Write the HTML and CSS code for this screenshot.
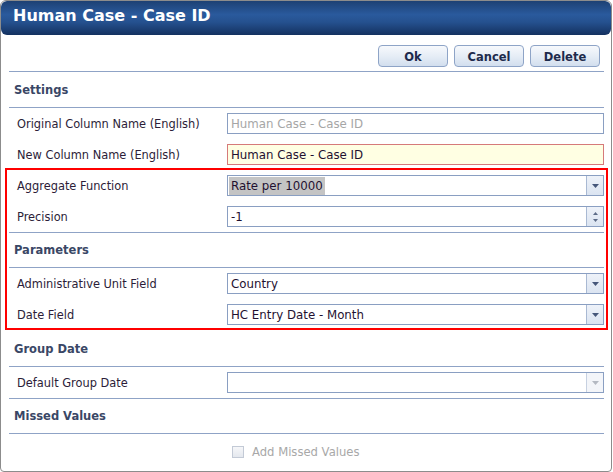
FILE: index.html
```html
<!DOCTYPE html>
<html>
<head>
<meta charset="utf-8">
<link rel="stylesheet" href="styles.css">
</head>
<body>
<div class="dialog">
  <div class="titlebar">Human Case - Case ID</div>
  <div class="content">
    <div class="toolbar">
      <button class="btn">Ok</button>
      <button class="btn">Cancel</button>
      <button class="btn">Delete</button>
    </div>
    <div class="section-head">Settings</div>
    <div class="row">
      <span class="label">Original Column Name (English)</span>
      <div class="field readonly"><span class="text">Human Case - Case ID</span></div>
    </div>
    <div class="row row-tight">
      <span class="label">New Column Name (English)</span>
      <div class="field required"><span class="text">Human Case - Case ID</span></div>
    </div>
    <div class="highlight">
      <div class="row">
        <span class="label">Aggregate Function</span>
        <div class="field combo">
          <span class="text"><span class="selected">Rate per 10000</span></span>
          <span class="drop"><svg width="7" height="4" viewBox="0 0 7 4"><polygon points="0,0 7,0 3.5,4" fill="#46577a"/></svg></span>
        </div>
      </div>
      <div class="row">
        <span class="label">Precision</span>
        <div class="field combo">
          <span class="text">-1</span>
          <span class="spin">
            <svg width="5" height="3" viewBox="0 0 5 3"><polygon points="2.5,0 5,3 0,3" fill="#5d6c88"/></svg>
            <svg width="5" height="3" viewBox="0 0 5 3"><polygon points="0,0 5,0 2.5,3" fill="#5d6c88"/></svg>
          </span>
        </div>
      </div>
      <div class="section-head top">Parameters</div>
      <div class="row">
        <span class="label">Administrative Unit Field</span>
        <div class="field combo">
          <span class="text">Country</span>
          <span class="drop"><svg width="7" height="4" viewBox="0 0 7 4"><polygon points="0,0 7,0 3.5,4" fill="#46577a"/></svg></span>
        </div>
      </div>
      <div class="row row-tight">
        <span class="label">Date Field</span>
        <div class="field combo">
          <span class="text">HC Entry Date - Month</span>
          <span class="drop"><svg width="7" height="4" viewBox="0 0 7 4"><polygon points="0,0 7,0 3.5,4" fill="#46577a"/></svg></span>
        </div>
      </div>
    </div>
    <div class="section-head tall">Group Date</div>
    <div class="row">
      <span class="label">Default Group Date</span>
      <div class="field combo disabled">
        <span class="text"></span>
        <span class="drop"><svg width="7" height="4" viewBox="0 0 7 4"><polygon points="0,0 7,0 3.5,4" fill="#b4b9c2"/></svg></span>
      </div>
    </div>
    <div class="section-head top">Missed Values</div>
    <div class="check-row">
      <span class="checkbox"></span>
      <span class="check-label">Add Missed Values</span>
    </div>
  </div>
</div>
</body>
</html>
```

FILE: styles.css
```css
* { box-sizing: border-box; }
html, body { margin: 0; padding: 0; background: #ffffff; }
body { font-family: "DejaVu Sans", Verdana, sans-serif; }

.dialog {
  width: 612px;
  height: 472px;
  border: 1px solid #8c8c8c;
  border-radius: 6px 6px 4px 4px;
  background: #ffffff;
  overflow: hidden;
}

.titlebar {
  height: 34px;
  border-radius: 6px;
  padding-left: 12px;
  line-height: 30px;
  font-size: 16px;
  font-weight: bold;
  color: #ffffff;
  background: linear-gradient(to bottom, #1d4174 0%, #2a5a9d 40%, #25518f 62%, #143160 100%);
}

.content {
  padding: 0 7px 0 8px;
}

.toolbar {
  display: flex;
  justify-content: flex-end;
  gap: 6px;
  padding: 10px 4px 4px 0;
  border-bottom: 1px solid #8fa3c6;
}

.btn {
  width: 70px;
  height: 22px;
  padding: 1px 0 0 0;
  border: 1px solid #8ea4c7;
  border-radius: 4px;
  background: linear-gradient(to bottom, #f7f9fc 0%, #e6edf6 50%, #d2deee 100%);
  font-family: "DejaVu Sans", Verdana, sans-serif;
  font-size: 11.5px;
  font-weight: bold;
  color: #1d2a4c;
}

.section-head {
  height: 36px;
  display: flex;
  align-items: center;
  padding-left: 5px;
  font-size: 11.5px;
  font-weight: bold;
  color: #3a4766;
  border-bottom: 1px solid #8fa3c6;
}
.section-head.top { border-top: 1px solid #8fa3c6; }
.section-head.tall { height: 37px; padding-top: 2px; }

.row {
  display: flex;
  align-items: center;
  padding: 5px 0 5px 8px;
}
.row-tight { padding-bottom: 3px; }

.label {
  width: 210px;
  flex: none;
  font-size: 11.4px;
  color: #2c1d38;
}

.field {
  flex: 1;
  height: 21px;
  border: 1px solid #8a9fc2;
  display: flex;
  align-items: stretch;
  font-size: 11.8px;
  color: #1f1030;
  background: #ffffff;
}
.field .text {
  flex: 1;
  display: flex;
  align-items: center;
  padding-left: 3px;
  white-space: nowrap;
}
.field.readonly { color: #a6a6a6; }
.field.required {
  background: #ffffe3;
  border-color: #d67a7a;
}
.combo .text { padding-left: 1px; }
.combo .text:not(:has(.selected)) { padding-left: 3px; }
.selected {
  background: #c4c4c4;
  padding: 2px 2px 2px 2px;
}

.drop, .spin {
  width: 17px;
  flex: none;
  border-left: 1px solid #a9b9d3;
  background: linear-gradient(to bottom, #eef2f9 0%, #dbe4f1 100%);
  display: flex;
  align-items: center;
  justify-content: center;
}
.spin {
  flex-direction: column;
  gap: 4px;
}
.disabled .drop {
  background: #f3f5f9;
  border-left-color: #c7d1e1;
}

.highlight {
  margin: 0 -4px;
  padding: 0 2px;
  border: 2px solid #ff0000;
}

.check-row {
  display: flex;
  align-items: center;
  gap: 8px;
  padding: 11px 0 0 223px;
}
.checkbox {
  width: 12px;
  height: 12px;
  border: 1px solid #c3cad6;
  background: linear-gradient(to bottom, #f6f7f9, #e4e8ee);
}
.check-label {
  font-size: 11.6px;
  color: #a8a8a8;
}
```
